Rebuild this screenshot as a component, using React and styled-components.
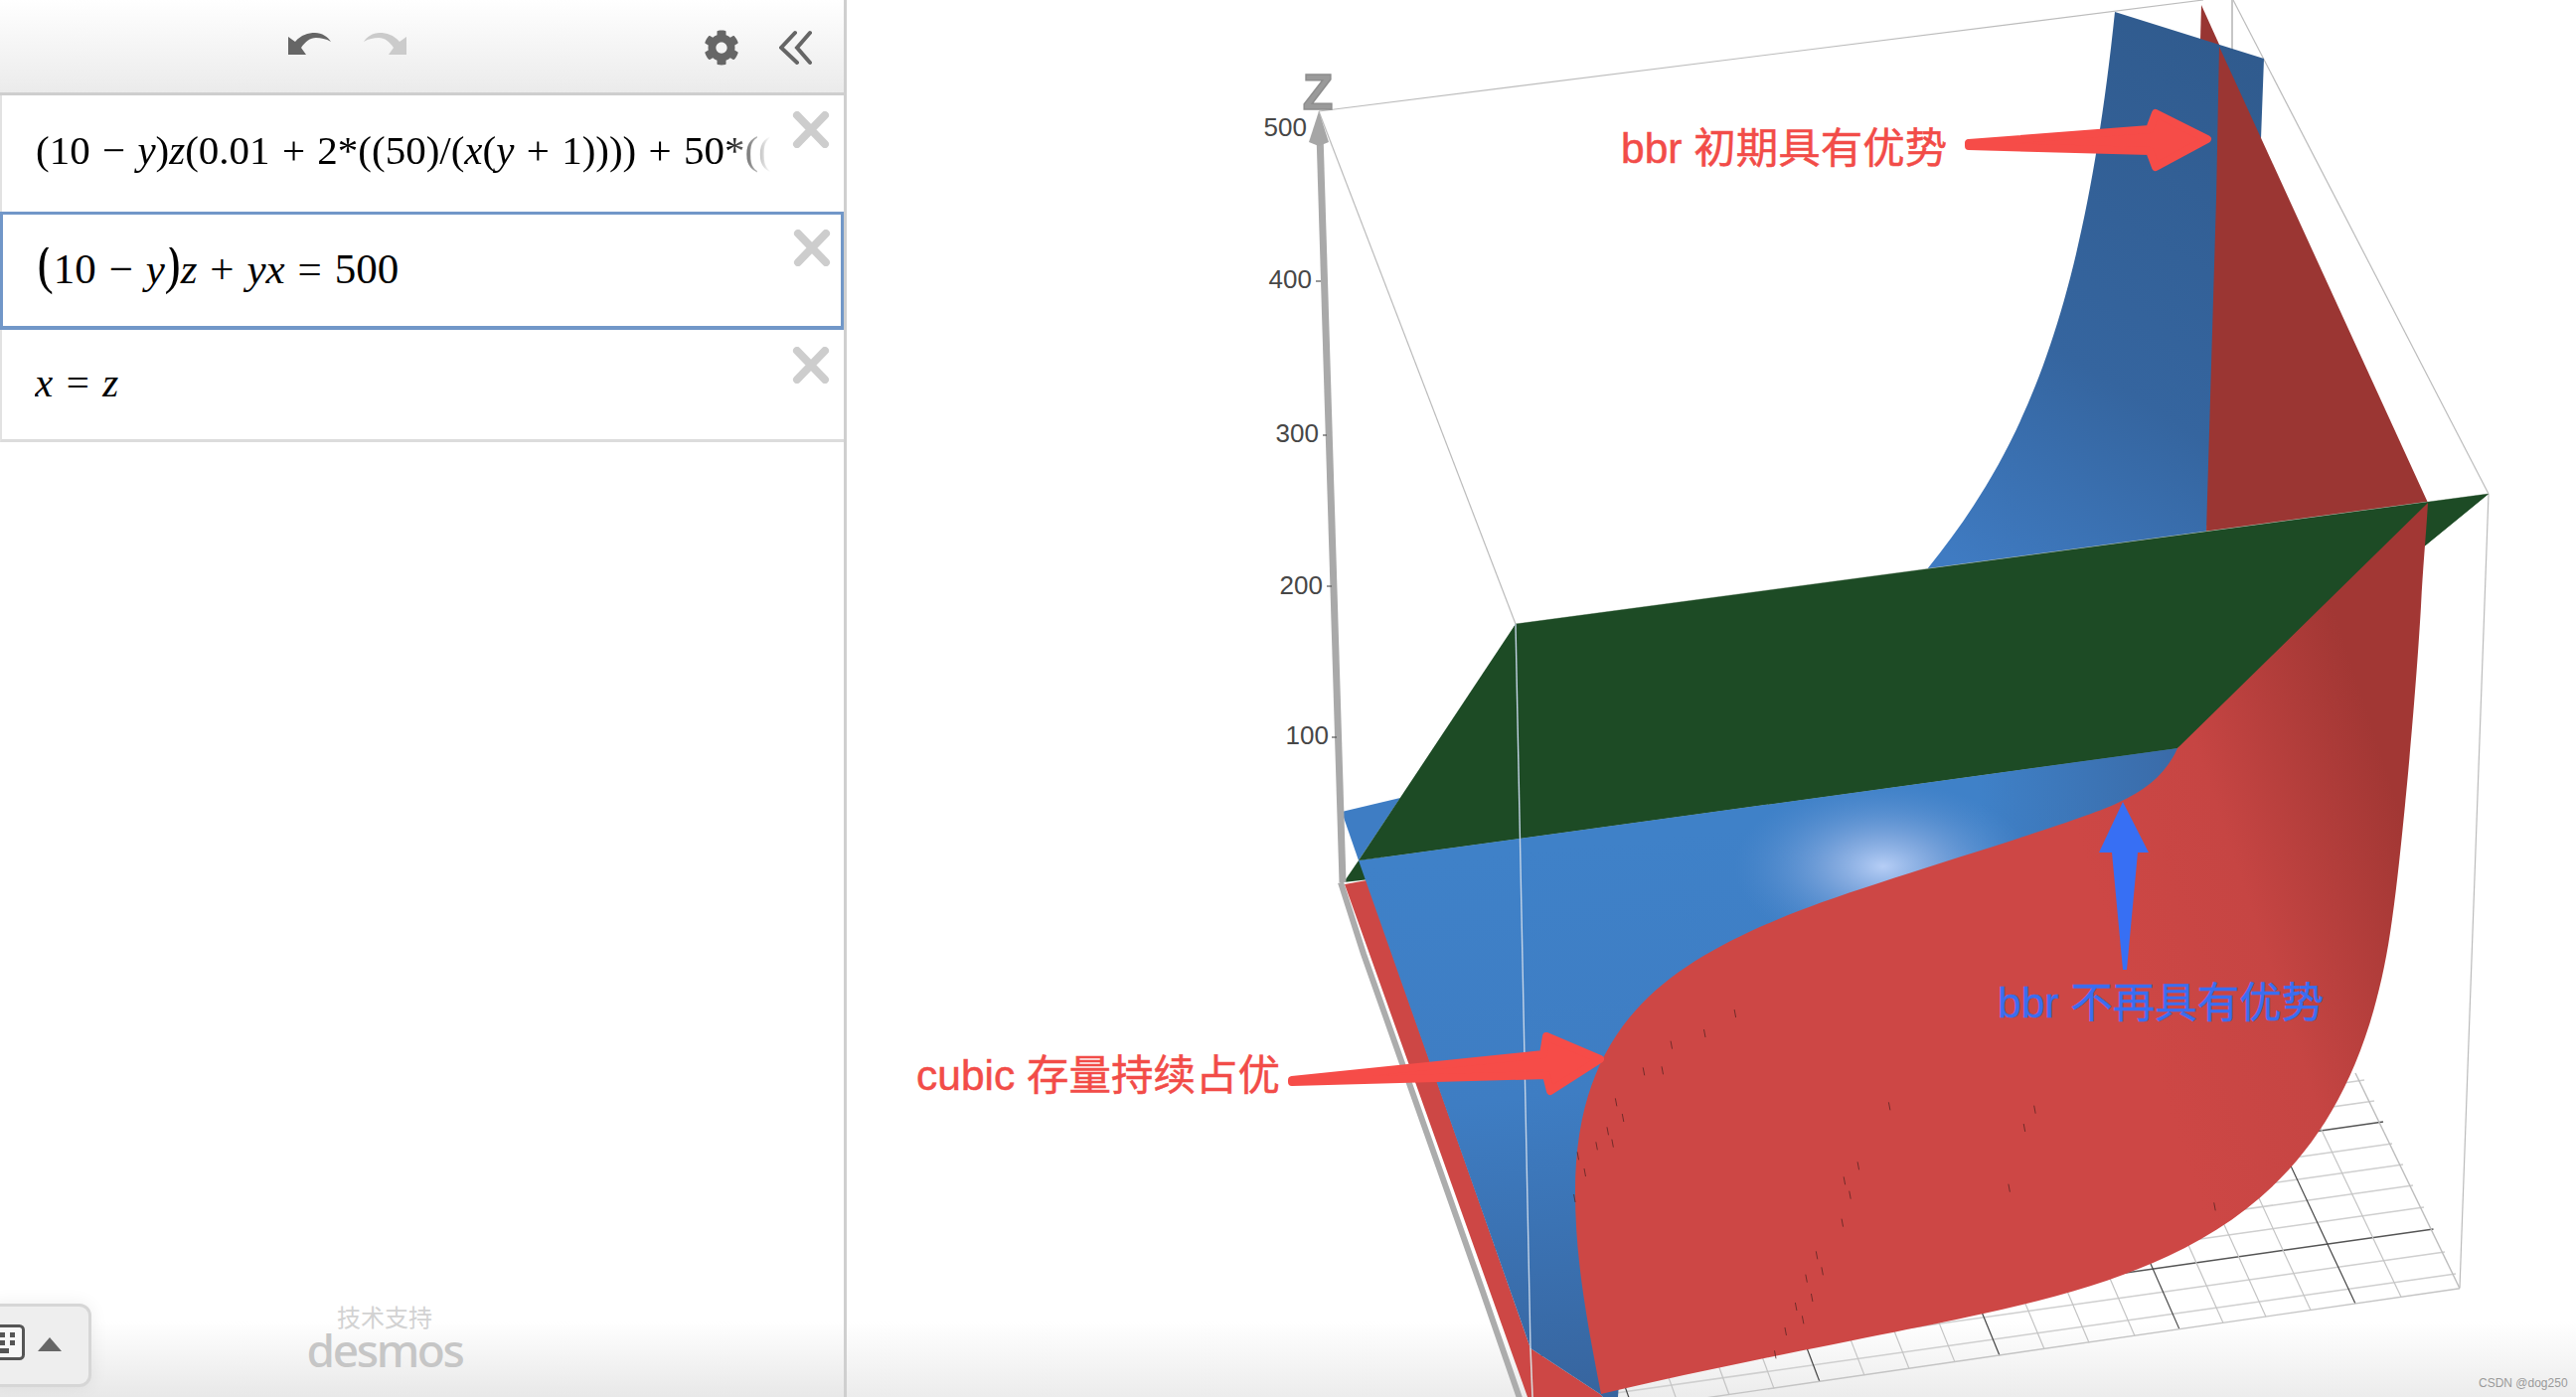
import React from 'react';
import styled, { createGlobalStyle } from 'styled-components';
import { FaCog } from 'react-icons/fa';

const Global = createGlobalStyle`
  html, body { margin: 0; padding: 0; background: #fff; }
  #root { width: 2592px; height: 1406px; overflow: hidden; }
`;

const Page = styled.div`
  display: flex;
  width: 2592px;
  height: 1406px;
  overflow: hidden;
`;

/* ---------- expression panel ---------- */
const Panel = styled.aside`
  position: relative;
  flex: 0 0 852px;
  box-sizing: border-box;
  display: flex;
  flex-direction: column;
  overflow: hidden;
  border-right: 3px solid #cfcfcf;
`;

const Toolbar = styled.header`
  flex: 0 0 96px;
  box-sizing: border-box;
  display: flex;
  align-items: flex-start;
  padding-top: 30px;
  background: linear-gradient(#ffffff, #ebebeb);
  border-bottom: 3px solid #cecece;
`;

const HistoryIcon = styled.svg`
  display: block;
  width: 43px;
  height: 24px;
  margin-top: 3px;
  margin-left: ${p => p.$left}px;
  fill: ${p => p.$color};
  transform: ${p => (p.$flip ? 'scaleX(-1)' : 'none')};
`;

const GearIcon = styled(FaCog)`
  display: block;
  width: 36px;
  height: 36px;
  margin-left: 299px;
  color: #666;
`;

const Collapse = styled.svg`
  display: block;
  width: 36px;
  height: 36px;
  margin-left: 40px;
  fill: none;
  stroke: #666;
  stroke-width: 4px;
  stroke-linecap: round;
`;

const Row = styled.div`
  position: relative;
  flex: 0 0 ${p => p.$height}px;
  box-sizing: border-box;
  padding: ${p => p.$top}px 0 0 ${p => p.$left}px;
  border-left: ${p => (p.$active ? '3px solid #7197c8' : '2px solid #e2e2e2')};
  border-top: ${p => (p.$active ? '3px solid #7197c8' : '0')};
  border-right: ${p => (p.$active ? '3px solid #7197c8' : '0')};
  border-bottom: ${p => (p.$active ? '4px solid #7197c8' : p.$last ? '3px solid #dcdcdc' : '0')};
`;

const MathLine = styled.div`
  font-family: "Liberation Serif", "Times New Roman", serif;
  font-size: ${p => p.$size}px;
  line-height: 1;
  color: #000;
  white-space: nowrap;
  overflow: hidden;
  padding-bottom: 12px;
  width: ${p => p.$width}px;
  ${p => p.$fade && 'mask-image: linear-gradient(to right, #000 94%, transparent 100%);'}
`;

const V = styled.i`
  font-style: italic;
`;

const Op = styled.span`
  margin: 0 ${p => p.$gap}em;
`;

const BigParen = styled.span`
  display: inline-block;
  font-size: 1.34em;
  line-height: 0;
  font-weight: 400;
  transform: scaleX(0.85) translateY(-0.02em);
  margin: 0 -0.03em;
`;

const Close = styled.svg`
  position: absolute;
  top: ${p => p.$top}px;
  left: 795px;
  width: 38px;
  height: 37px;
  stroke: #cdcdcd;
  stroke-width: 8px;
  fill: none;
  stroke-linecap: round;
`;

const Spacer = styled.div`
  flex: 1;
`;

const Footer = styled.footer`
  flex: 0 0 97px;
  box-sizing: border-box;
  display: flex;
  flex-direction: column;
  align-items: center;
  width: 774px;
  padding-top: 2px;
`;

const FooterFade = styled.div`
  position: absolute;
  left: 0;
  right: 0;
  bottom: 0;
  height: 76px;
  background: linear-gradient(rgba(232,232,232,0), #e8e8e8);
  pointer-events: none;
`;

const Credit = styled.div`
  position: relative;
  font-family: "Noto Sans CJK SC", sans-serif;
  font-size: 24px;
  line-height: 27px;
  color: #d2d2d2;
`;

const Brand = styled.div`
  position: relative;
  font-family: "Noto Sans", sans-serif;
  font-size: 46px;
  font-weight: 500;
  line-height: 40px;
  letter-spacing: -2.4px;
  color: #c6c6c6;
`;

const Keypad = styled.button`
  position: absolute;
  left: -14px;
  top: 1312px;
  width: 106px;
  height: 84px;
  box-sizing: border-box;
  display: flex;
  align-items: center;
  gap: 13px;
  padding: 0;
  background: #eeeeee;
  border: 3px solid #d6d6d6;
  border-radius: 12px;
  box-shadow: 0 0 18px rgba(0,0,0,0.07);
`;

const KeyIcon = styled.svg`
  display: block;
  width: 36px;
  height: 36px;
  margin-top: -6px;
`;

const Caret = styled.span`
  display: block;
  margin-top: -2px;
  width: 0;
  height: 0;
  border-left: 12px solid transparent;
  border-right: 12px solid transparent;
  border-bottom: 14px solid #666;
`;

/* ---------- 3D plot ---------- */
const Canvas = styled.main`
  flex: 1;
  background: linear-gradient(to top, #ececec 0, #f6f6f6 40px, #ffffff 76px);
`;

const Plot = styled.svg`
  display: block;
  width: 100%;
  height: 100%;
`;

const TickLabel = styled.text`
  font-family: "Liberation Sans", Arial, sans-serif;
  font-size: 26px;
  fill: #474747;
  text-anchor: end;
`;

const AxisName = styled.text`
  font-family: "Liberation Sans", Arial, sans-serif;
  font-size: 50px;
  font-weight: 700;
  fill: #9a9a9a;
  stroke: #8d8d8d;
  stroke-width: 1.5px;
  text-anchor: middle;
`;

const Note = styled.text`
  font-family: "Liberation Sans", "Noto Sans CJK SC", sans-serif;
  font-size: 42.5px;
  fill: ${p => p.$color};
  stroke: ${p => p.$color};
  stroke-width: 0.5px;
`;

const Watermark = styled.text`
  font-family: "Liberation Sans", Arial, sans-serif;
  font-size: 12px;
  fill: #9a9a9a;
`;

const redPath = [
  'M2191 753 L2443 506',
  'C2441 540 2438 570 2436 610 C2432 680 2424 770 2420 810 C2416 850 2412 890 2407 925',
  'C2370 1200 2215 1275 1996 1322',
  'C1930 1337 1750 1370 1611 1403',
  'C1598 1335 1585 1270 1585 1200',
  'C1585 1030 1680 970 1799 921',
  'C1880 888 2080 832 2131 808',
  'C2160 795 2180 778 2191 753 Z',
].join(' ');

const blueUpperPath = 'M2278 59 L2275 140 L2220 535 L1939 573 C2030 460 2095 330 2128 12 Z';

const aLines = [[2471,1282],[2460,1260],[2448.5,1237,1],[2439,1215],[2428,1193],[2418,1172],[2407,1151],[2398,1129,1],[2389,1108],[2379,1087]];
const bLines = [[2416],[2370,1],[2325],[2280],[2237],[2193,1],[2148],[2102],[2057],[2012,1],[1967],[1921],[1876],[1831,1],[1785],[1740],[1688],[1643,1]];
const edgeY = x => 1296.7 + (2475 - x) * 0.146;
const slopeB = x => 0.486 - (2475 - x) * (0.106 / 644);

const specks = [[260,155],[220,235],[247,232],[180,328],[190,375],[168,415],[152,460],[175,452],[125,490],[135,540],[120,618],[352,60],[308,120],[575,340],[785,350],[770,405],[530,520],[510,565],[518,608],[507,692],[748,587],[1045,643],[470,790],[478,838],[455,860],[463,918],[440,945],[450,985],[425,1020],[410,1090]];

const Expression1 = () => (
  <MathLine $size={41} $width={739} $fade>
    (10<Op $gap={0.3}>−</Op><V>y</V>)<V>z</V>(0.01<Op $gap={0.3}>+</Op>2*((50)/(<V>x</V>(<V>y</V><Op $gap={0.3}>+</Op>1))))<Op $gap={0.3}>+</Op>50*((
  </MathLine>
);

const Expression2 = () => (
  <MathLine $size={43} $width={700}>
    <BigParen>(</BigParen>10<Op $gap={0.3}>−</Op><V>y</V><BigParen>)</BigParen><V>z</V><Op $gap={0.3}>+</Op><V>y</V><V>x</V><Op $gap={0.3}>=</Op>500
  </MathLine>
);

const Expression3 = () => (
  <MathLine $size={41} $width={700}>
    <V>x</V><Op $gap={0.33}>=</Op><V>z</V>
  </MathLine>
);

const CloseIcon = ({ top }) => (
  <Close $top={top} viewBox="0 0 38 37">
    <path d="M5 4 L33 33 M33 4 L5 33" />
  </Close>
);

const undoPath = 'M0 4 L7 9 C13 2 20 0 27 0 C34 0 40 4 43 9 C38 6 33 5 28 5 C22 5 17 9 13 15 L18 22 H0 Z';

export default function App() {
  return (
    <Page>
      <Global />
      <Panel>
        <Toolbar>
          <HistoryIcon $left={290} $color="#666" viewBox="0 0 43 24">
            <path d={undoPath} />
          </HistoryIcon>
          <HistoryIcon $left={33} $color="#cbcbcb" $flip viewBox="0 0 43 24">
            <path d={undoPath} />
          </HistoryIcon>
          <GearIcon />
          <Collapse viewBox="0 0 36 36">
            <path d="M16 3 L2 18 L18 33 M31 3 L18 18 L31 33" />
          </Collapse>
        </Toolbar>
        <Row $height={117} $top={35} $left={34}>
          <Expression1 />
          <CloseIcon top={16} />
        </Row>
        <Row $height={119} $top={33} $left={35} $active>
          <Expression2 />
          <CloseIcon top={15} />
        </Row>
        <Row $height={113} $top={33} $left={33} $last>
          <Expression3 />
          <CloseIcon top={17} />
        </Row>
        <Spacer />
        <FooterFade />
        <Footer>
          <Credit>技术支持</Credit>
          <Brand>desmos</Brand>
        </Footer>
        <Keypad aria-label="keypad">
          <KeyIcon viewBox="0 0 36 36">
            <rect x="1.5" y="1.5" width="33" height="33" rx="4" fill="#f7f7f7" stroke="#555" strokeWidth="3" />
            <g fill="#555">
              <rect x="11" y="8" width="5" height="5" />
              <rect x="21" y="8" width="5" height="5" />
              <rect x="11" y="16" width="5" height="5" />
              <rect x="21" y="16" width="5" height="5" />
              <rect x="8" y="24" width="12" height="5" />
            </g>
          </KeyIcon>
          <Caret />
        </Keypad>
      </Panel>

      <Canvas>
        <Plot viewBox="852 0 1740 1406">
          <defs>
            <linearGradient id="blueLow" gradientUnits="userSpaceOnUse" x1="1500" y1="860" x2="1560" y2="1406">
              <stop offset="0" stopColor="#3f81c8" />
              <stop offset="0.45" stopColor="#3e7dc3" />
              <stop offset="1" stopColor="#37659f" />
            </linearGradient>
            <linearGradient id="blueHigh" gradientUnits="userSpaceOnUse" x1="2270" y1="60" x2="1960" y2="560">
              <stop offset="0" stopColor="#305b8e" />
              <stop offset="0.6" stopColor="#35659f" />
              <stop offset="1" stopColor="#3f7bc2" />
            </linearGradient>
            <linearGradient id="blueSide" gradientUnits="userSpaceOnUse" x1="1990" y1="800" x2="2190" y2="780">
              <stop offset="0" stopColor="#3a6ba8" stopOpacity="0" />
              <stop offset="1" stopColor="#3a6ba8" stopOpacity="1" />
            </linearGradient>
            <radialGradient id="glare" gradientUnits="userSpaceOnUse" cx="0" cy="0" r="1"
              gradientTransform="translate(1895 872) scale(150 85)">
              <stop offset="0" stopColor="#b6cef6" />
              <stop offset="0.35" stopColor="#90b1e3" stopOpacity="0.75" />
              <stop offset="1" stopColor="#5a8fd0" stopOpacity="0" />
            </radialGradient>
            <linearGradient id="redMain" gradientUnits="userSpaceOnUse" x1="2130" y1="960" x2="2430" y2="860">
              <stop offset="0" stopColor="#cd4745" />
              <stop offset="0.45" stopColor="#c64543" />
              <stop offset="1" stopColor="#a23734" />
            </linearGradient>
          </defs>

          {/* floor grid */}
          <g fill="none">
            {aLines.map(([x, y, dark], i) => (
              <line key={`a${i}`} x1={x} y1={y} x2={x - 900} y2={y + 900 * 0.142}
                stroke={dark ? '#555' : '#cfcfcf'} strokeWidth={1.5} />
            ))}
            {bLines.map(([x, dark], i) => {
              const y = edgeY(x);
              const len = 330;
              return (
                <line key={`b${i}`} x1={x} y1={y} x2={x - len * slopeB(x)} y2={y - len}
                  stroke={dark ? '#444' : '#c4c4c4'} strokeWidth={1.2} />
              );
            })}
            <line x1="2475" y1="1296.7" x2="1640" y2="1418" stroke="#c4c4c4" strokeWidth="1.4" />
            <line x1="2475" y1="1296.7" x2="2370" y2="1080" stroke="#bdbdbd" strokeWidth="1.4" />
          </g>

          {/* bounding box */}
          <g stroke="#bcbcbc" strokeWidth="1.2" fill="none">
            <line x1="1327" y1="112" x2="2217" y2="0" />
            <line x1="1327" y1="112" x2="1525" y2="628" />
            <line x1="2247" y1="0" x2="2504" y2="497" />
            <line x1="2504" y1="497" x2="2475" y2="1296" />
            <line x1="2246" y1="0" x2="2246" y2="50" strokeWidth="2" stroke="#c6c6c6" />
          </g>

          {/* surfaces */}
          <polygon points="2215,5 2234,47 2214,41" fill="#983532" />
          <path d={blueUpperPath} fill="url(#blueHigh)" />
          <polygon points="2233,47 2443,506 2220,535 2230,200" fill="#9b3633" />
          <polygon points="1350,817 1409,803 1367,866" fill="#3e7dc4" />

          {/* lower edge of the z axis frame */}
          <polyline points="1349,888 1372,960 1492,1300 1530,1410" fill="none" stroke="#acacac" strokeWidth="6" />
          <polygon points="1353,890 1375,886 1540,1357 1610,1403 1613,1406 1537,1406" fill="#cd4745" />

          <polygon points="1525,628 2504,497 2191,753 1367,866 1352,888 1378,885" fill="#1d4b25" />
          <line x1="1525" y1="628" x2="2504" y2="497" stroke="#aebcae" strokeWidth="1" />

          <polygon points="1367,866 2191,753 2200,800 1650,1100 1628,1406 1613,1406 1610,1403 1540,1357" fill="url(#blueLow)" />
          <polygon points="1990,780 2191,753 2200,800 1990,900" fill="url(#blueSide)" />
          <ellipse cx="1895" cy="872" rx="150" ry="85" fill="url(#glare)" />
          <polygon points="1367,866 2191,753 2504,497 1525,628" fill="#1d4b25" />
          <line x1="1525" y1="628" x2="1540" y2="1357" stroke="#c3d3e6" strokeWidth="1.4" />
          <line x1="1540" y1="1357" x2="1542" y2="1406" stroke="#d9d9d9" strokeWidth="1.6" />

          <path d={redPath} fill="url(#redMain)" />
          <g stroke="#5a2523" strokeWidth="1" opacity="0.8">
            {specks.map(([x, y], i) => {
              const fx = 1500 + x / 1.436;
              const fy = 1000 + y / 3;
              return <line key={i} x1={fx} y1={fy - 4} x2={fx + 1.5} y2={fy + 4} />;
            })}
          </g>

          {/* axis and ticks */}
          <line x1="1328" y1="135" x2="1351" y2="888" stroke="#a9a9a9" strokeWidth="7" />
          <polygon points="1327,112 1337,143 1327,147 1317,143" fill="#a6a6a6" />
          <AxisName x="1326" y="110">Z</AxisName>
          <TickLabel x="1315" y="137">500</TickLabel>
          <TickLabel x="1320" y="290">400</TickLabel>
          <TickLabel x="1327" y="445">300</TickLabel>
          <TickLabel x="1331" y="598">200</TickLabel>
          <TickLabel x="1337" y="749">100</TickLabel>
          <g stroke="#555" strokeWidth="1.2">
            <line x1="1324" y1="283" x2="1329" y2="283" />
            <line x1="1331" y1="438" x2="1335" y2="438" />
            <line x1="1335" y1="590" x2="1340" y2="590" />
            <line x1="1340" y1="742" x2="1345" y2="742" />
          </g>

          {/* annotations */}
          <g fill="#f64c48" stroke="#f64c48" strokeWidth="8" strokeLinejoin="round">
            <polygon points="1981,144 2163,130 2169,114 2221,140 2169,168 2163,152 1981,147" />
            <polygon points="1300,1087 1553,1061 1556,1043 1610,1066 1560,1098 1556,1082 1300,1089" />
          </g>
          <polygon points="2136,807 2162,858 2151,858 2140,976 2136,976 2125,858 2112,858" fill="#376ff4" />
          <Note x="1631" y="164" $color="#f24c48">bbr 初期具有优势</Note>
          <Note x="922" y="1097" $color="#f24c48">cubic 存量持续占优</Note>
          <Note x="2010" y="1024" $color="#3a6ef0">bbr 不再具有优势</Note>
          <Watermark x="2494" y="1396">CSDN @dog250</Watermark>
        </Plot>
      </Canvas>
    </Page>
  );
}
